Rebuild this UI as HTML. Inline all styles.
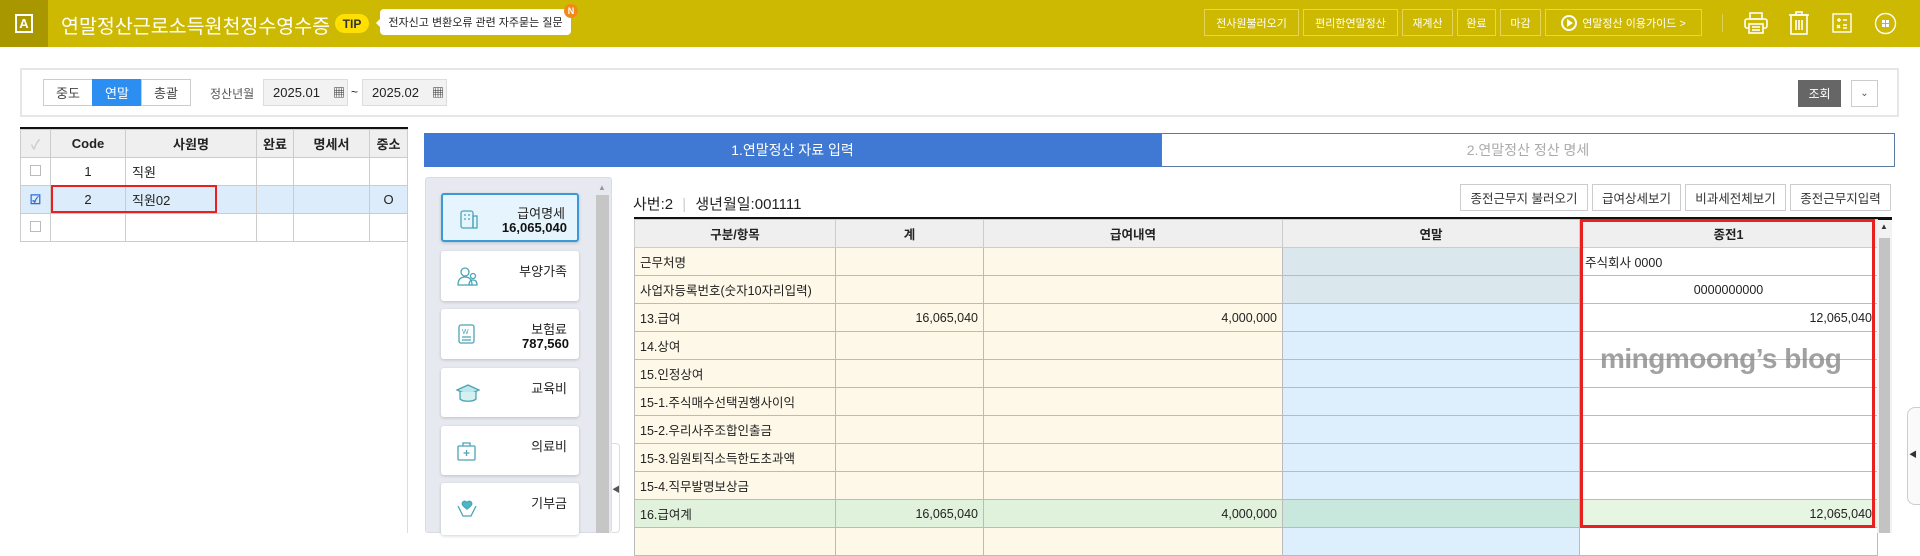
<!DOCTYPE html>
<html><head><meta charset="utf-8">
<style>
*{box-sizing:border-box;margin:0;padding:0}
body{width:1920px;height:533px;overflow:hidden;background:#fff;font-family:"Liberation Sans","Noto Sans CJK KR",sans-serif;font-size:13px;color:#222;position:relative}
.a{position:absolute}
.hdr{left:0;top:0;width:1920px;height:47px;background:#cdb902}
.hb{border:1px solid #e4d55a;color:#fff;font-size:11px;display:flex;align-items:center;justify-content:center;top:9px;height:27px}
.seg{top:79px;height:27px;border:1px solid #ccc;display:flex;align-items:center;justify-content:center;font-size:13px;color:#444}
.date{top:79px;height:27px;background:#f2f2f2;border:1px solid #ddd;font-size:13px;display:flex;align-items:center;padding-left:9px}
table{border-collapse:collapse;position:absolute}
.lt td,.lt th{border:1px solid #ccc;height:28px;text-align:center;font-size:13px;font-weight:normal}
.lt th{background:#efefef;font-weight:bold}
.card{left:441px;width:138px;background:#fff;border-radius:3px;box-shadow:0 1px 3px rgba(0,0,0,.18)}
.card .t{position:absolute;right:12px;top:10px;font-size:13px;color:#222}
.card .v{position:absolute;right:10px;top:27px;font-size:13px;font-weight:bold;color:#111}
.card svg{position:absolute;left:15px;top:14px}
.btn{top:184px;height:27px;border:1px solid #ccc;background:#fff;display:flex;align-items:center;justify-content:center;font-size:12.5px;color:#333}
.mt td,.mt th{border:1px solid #bbb;height:28px;font-size:12.5px;padding:0 5px}
.mt th{background:#efefef;font-weight:bold;text-align:center;border-color:#ccc}
.c{background:#fdf8e7}
.b{background:#ddeefc}
.bt{background:#dae8ed}
.g{background:#e0f1dc}
.gb{background:#c8e8dd}
.gw{background:#e6f6e3}
.r{text-align:right}
</style></head><body>
<div class="a hdr"></div>
<div class="a" style="left:0;top:0;width:48px;height:47px;background:#a99700"></div>
<div class="a" style="left:15px;top:14px;width:18px;height:19px;border:2px solid #fff;color:#fff;font-size:13px;font-weight:bold;display:flex;align-items:center;justify-content:center">A</div>
<div class="a" style="left:61px;top:10px;color:#fff;font-size:19.5px">연말정산근로소득원천징수영수증</div>
<div class="a" style="left:335px;top:14px;width:34px;height:19px;border-radius:10px;background:#ffe000;font-size:12px;font-weight:bold;color:#333;display:flex;align-items:center;justify-content:center">TIP</div>
<div class="a" style="left:380px;top:9px;width:191px;height:26px;background:#fff;border-radius:4px;font-size:11px;display:flex;align-items:center;justify-content:center;color:#222">전자신고 변환오류 관련 자주묻는 질문</div>
<div class="a" style="left:376px;top:18px;width:0;height:0;border-top:5px solid transparent;border-bottom:5px solid transparent;border-right:5px solid #fff"></div>
<div class="a" style="left:564px;top:4px;width:14px;height:14px;border-radius:7px;background:#f08a1c;color:#fff;font-size:9px;font-weight:bold;display:flex;align-items:center;justify-content:center">N</div>
<div class="a hb" style="left:1204px;width:95px">전사원불러오기</div>
<div class="a hb" style="left:1303px;width:95px">편리한연말정산</div>
<div class="a hb" style="left:1402px;width:51px">재계산</div>
<div class="a hb" style="left:1457px;width:39px">완료</div>
<div class="a hb" style="left:1500px;width:41px">마감</div>
<div class="a hb" style="left:1545px;width:157px"><span style="display:inline-block;width:16px;height:16px;border:2px solid #fff;border-radius:50%;margin-right:5px;position:relative"><span style="position:absolute;left:4px;top:2px;border-top:4px solid transparent;border-bottom:4px solid transparent;border-left:6px solid #fff"></span></span>연말정산 이용가이드 &gt;</div>
<div class="a" style="left:1722px;top:14px;width:1px;height:18px;background:#e0d15a"></div>
<svg class="a" style="left:1744px;top:12px" width="24" height="22" viewBox="0 0 24 22" fill="none" stroke="#fff" stroke-width="1.6"><rect x="6" y="1" width="12" height="6"/><rect x="1" y="7" width="22" height="9" rx="2"/><rect x="5" y="12" width="14" height="9" fill="#cdb902"/><line x1="8" y1="15" x2="16" y2="15"/><line x1="8" y1="18" x2="16" y2="18"/></svg>
<svg class="a" style="left:1788px;top:11px" width="22" height="24" viewBox="0 0 22 24" fill="none" stroke="#fff" stroke-width="1.6"><rect x="8" y="1" width="6" height="3"/><line x1="1" y1="4" x2="21" y2="4"/><rect x="3" y="4" width="16" height="19"/><line x1="8" y1="9" x2="8" y2="19"/><line x1="11" y1="9" x2="11" y2="19"/><line x1="14" y1="9" x2="14" y2="19"/></svg>
<svg class="a" style="left:1832px;top:13px" width="20" height="20" viewBox="0 0 20 20" fill="none" stroke="#fff" stroke-width="1.4"><rect x="1" y="1" width="18" height="18"/><path d="M5 7h4M7 5v4M11 7h4M5 12l3 3M8 12l-3 3M11 12h4M11 15h4"/></svg>
<svg class="a" style="left:1874px;top:12px" width="23" height="23" viewBox="0 0 23 23" fill="none" stroke="#fff" stroke-width="1.4"><circle cx="11.5" cy="11.5" r="10"/><g fill="#fff" stroke="none"><rect x="8" y="8" width="3" height="3"/><rect x="12" y="8" width="3" height="3"/><rect x="8" y="12" width="3" height="3"/><rect x="12" y="12" width="3" height="3"/></g></svg>

<div class="a" style="left:20px;top:68px;width:1879px;height:49px;border:2px solid #e6e6e6"></div>
<div class="a seg" style="left:43px;width:50px">중도</div>
<div class="a seg" style="left:92px;width:50px;background:#2b8ef0;border-color:#2b8ef0;color:#fff">연말</div>
<div class="a seg" style="left:141px;width:50px">총괄</div>
<div class="a" style="left:210px;top:85px;font-size:12px;color:#555">정산년월</div>
<div class="a date" style="left:263px;width:85px">2025.01<span style="margin-left:13px;font-size:12px">▦</span></div>
<div class="a" style="left:351px;top:85px;font-size:12px">~</div>
<div class="a date" style="left:362px;width:85px">2025.02<span style="margin-left:13px;font-size:12px">▦</span></div>
<div class="a" style="left:1798px;top:80px;width:43px;height:27px;background:#666;color:#fff;font-size:12px;display:flex;align-items:center;justify-content:center">조회</div>
<div class="a" style="left:1851px;top:80px;width:27px;height:27px;border:1px solid #ccc;font-size:10px;color:#555;display:flex;align-items:center;justify-content:center">⌄</div>

<div class="a" style="left:20px;top:127px;width:388px;height:3px;background:#111"></div>
<div class="a" style="left:407px;top:130px;width:1px;height:403px;background:#ddd"></div>
<table class="lt" style="left:20px;top:129px;width:388px">
<tr><th style="width:30px;color:#ccc">✓</th><th style="width:75px">Code</th><th style="width:131px">사원명</th><th style="width:37px">완료</th><th style="width:76px">명세서</th><th>중소</th></tr>
<tr><td><span style="display:inline-block;width:11px;height:11px;border:1px solid #bbb"></span></td><td>1</td><td style="text-align:left;padding-left:6px">직원</td><td></td><td></td><td></td></tr>
<tr style="background:#ddecfa"><td style="color:#2b6fd6;font-weight:bold">☑</td><td>2</td><td style="text-align:left;padding-left:6px">직원02</td><td></td><td></td><td>O</td></tr>
<tr><td><span style="display:inline-block;width:11px;height:11px;border:1px solid #bbb"></span></td><td></td><td></td><td></td><td></td><td></td></tr>
</table>
<div class="a" style="left:51px;top:185px;width:166px;height:28px;border:2px solid #e82020"></div>

<div class="a" style="left:424px;top:133px;width:737px;height:34px;background:#3f79d4;color:#fff;font-size:14px;display:flex;align-items:center;justify-content:center">1.연말정산 자료 입력</div>
<div class="a" style="left:1161px;top:133px;width:734px;height:34px;border:1px solid #5b7aa6;color:#aaa;font-size:14px;display:flex;align-items:center;justify-content:center">2.연말정산 정산 명세</div>

<div class="a" style="left:425px;top:177px;width:187px;height:356px;background:#e6eaf0;border:1px solid #d8dde4;border-radius:3px"></div>
<div class="a" style="left:596px;top:195px;width:13px;height:338px;background:#c6c6c6"></div>
<div class="a" style="left:598px;top:183px;font-size:8px;color:#999">▲</div>
<div class="card a" style="top:193px;height:49px;border:2px solid #3a9ad9;background:#e6f5fd"><svg width="22" height="22" viewBox="0 0 22 22" fill="none" stroke="#4aa5b5" stroke-width="1.3"><rect x="3" y="2" width="12" height="17" rx="2"/><rect x="15" y="7" width="4" height="12"/><path d="M6 6h2M10 6h2M6 10h2M10 10h2"/></svg><div class="t" style="top:8px">급여명세</div><div class="v" style="top:25px">16,065,040</div></div>
<div class="card a" style="top:251px;height:50px"><svg width="24" height="22" viewBox="0 0 24 22" fill="none" stroke="#4aa5b5" stroke-width="1.3"><circle cx="9" cy="7" r="4"/><path d="M2 20c0-6 3-8 7-8s7 2 7 8z"/><circle cx="17" cy="11" r="2.5"/><path d="M13 20c0-4 2-5 4-5s4 1 4 5z"/></svg><div class="t">부양가족</div></div>
<div class="card a" style="top:309px;height:50px"><svg width="22" height="22" viewBox="0 0 22 22" fill="none" stroke="#4aa5b5" stroke-width="1.3"><rect x="3" y="2" width="15" height="18" rx="2"/><text x="6" y="11" font-size="7" fill="#4aa5b5" stroke="none" font-family="Liberation Sans">W</text><path d="M6 14h9M6 17h9"/></svg><div class="t">보험료</div><div class="v">787,560</div></div>
<div class="card a" style="top:368px;height:49px"><svg width="24" height="22" viewBox="0 0 24 22" fill="none" stroke="#4aa5b5" stroke-width="1.3"><path d="M1 8l11-5 11 5-11 5z" fill="#bfe6ea"/><path d="M4 10v7c3 3 13 3 16 0v-7" fill="#d5f0f0"/></svg><div class="t">교육비</div></div>
<div class="card a" style="top:426px;height:49px"><svg width="22" height="22" viewBox="0 0 22 22" fill="none" stroke="#4aa5b5" stroke-width="1.3"><rect x="2" y="6" width="17" height="14" rx="1"/><path d="M7 6V3h7v3M10.5 10v6M7.5 13h6"/></svg><div class="t">의료비</div></div>
<div class="card a" style="top:483px;height:52px"><svg width="22" height="24" viewBox="0 0 22 24" fill="none" stroke="#4aa5b5" stroke-width="1.3"><path d="M11 12c-4-3-6-5-4-7 1.5-1.5 3-.5 4 .5 1-1 2.5-2 4-.5 2 2 0 4-4 7z" fill="#4ab8c8"/><path d="M2 9l5 10h8l5-10"/></svg><div class="t">기부금</div></div>
<div class="a" style="left:612px;top:443px;width:8px;height:90px;border:1px solid #ddd;border-left:none;border-radius:0 4px 4px 0;background:#fff"></div>
<div class="a" style="left:612px;top:484px;font-size:8px;color:#555">◀</div>

<div class="a" style="left:633px;top:193px;font-size:15px;color:#222">사번:2 <span style="color:#ccc;margin:0 5px">|</span> 생년월일:001111</div>
<div class="a btn" style="left:1460px;width:128px">종전근무지 불러오기</div>
<div class="a btn" style="left:1592px;width:89px">급여상세보기</div>
<div class="a btn" style="left:1685px;width:101px">비과세전체보기</div>
<div class="a btn" style="left:1790px;width:101px">종전근무지입력</div>
<div class="a" style="left:634px;top:217px;width:1258px;height:3px;background:#111"></div>
<table class="mt" style="left:634px;top:219px;width:1243px;table-layout:fixed">
<colgroup><col style="width:201px"><col style="width:148px"><col style="width:299px"><col style="width:297px"><col style="width:298px"></colgroup>
<tr><th>구분/항목</th><th>계</th><th>급여내역</th><th>연말</th><th>종전1</th></tr>
<tr><td class="c">근무처명</td><td class="c"></td><td class="c"></td><td class="bt"></td><td>주식회사 0000</td></tr>
<tr><td class="c">사업자등록번호(숫자10자리입력)</td><td class="c"></td><td class="c"></td><td class="bt"></td><td style="text-align:center">0000000000</td></tr>
<tr><td class="c">13.급여</td><td class="c r">16,065,040</td><td class="c r">4,000,000</td><td class="b"></td><td class="r">12,065,040</td></tr>
<tr><td class="c">14.상여</td><td class="c"></td><td class="c"></td><td class="b"></td><td></td></tr>
<tr><td class="c">15.인정상여</td><td class="c"></td><td class="c"></td><td class="b"></td><td></td></tr>
<tr><td class="c">15-1.주식매수선택권행사이익</td><td class="c"></td><td class="c"></td><td class="b"></td><td></td></tr>
<tr><td class="c">15-2.우리사주조합인출금</td><td class="c"></td><td class="c"></td><td class="b"></td><td></td></tr>
<tr><td class="c">15-3.임원퇴직소득한도초과액</td><td class="c"></td><td class="c"></td><td class="b"></td><td></td></tr>
<tr><td class="c">15-4.직무발명보상금</td><td class="c"></td><td class="c"></td><td class="b"></td><td></td></tr>
<tr><td class="g">16.급여계</td><td class="g r">16,065,040</td><td class="g r">4,000,000</td><td class="gb"></td><td class="gw r">12,065,040</td></tr>
<tr><td class="c"></td><td class="c"></td><td class="c"></td><td class="b"></td><td></td></tr>
</table>
<div class="a" style="left:1877px;top:220px;width:15px;height:313px;background:#f2f2f2"></div>
<div class="a" style="left:1879px;top:238px;width:11px;height:295px;background:#c3c3c3"></div>
<div class="a" style="left:1880px;top:222px;font-size:8px;color:#333">▲</div>
<div class="a" style="left:1580px;top:219px;width:295px;height:309px;border:3px solid #e82020"></div>
<div class="a" style="left:1600px;top:343px;font-size:28px;font-weight:bold;color:rgba(130,130,130,.75);letter-spacing:-0.5px">mingmoong’s blog</div>
<div class="a" style="left:1907px;top:407px;width:13px;height:98px;border:1px solid #ccc;border-right:none;border-radius:8px 0 0 8px;background:#fafafa"></div>
<div class="a" style="left:1909px;top:449px;font-size:8px;color:#333">◀</div>
</body></html>
